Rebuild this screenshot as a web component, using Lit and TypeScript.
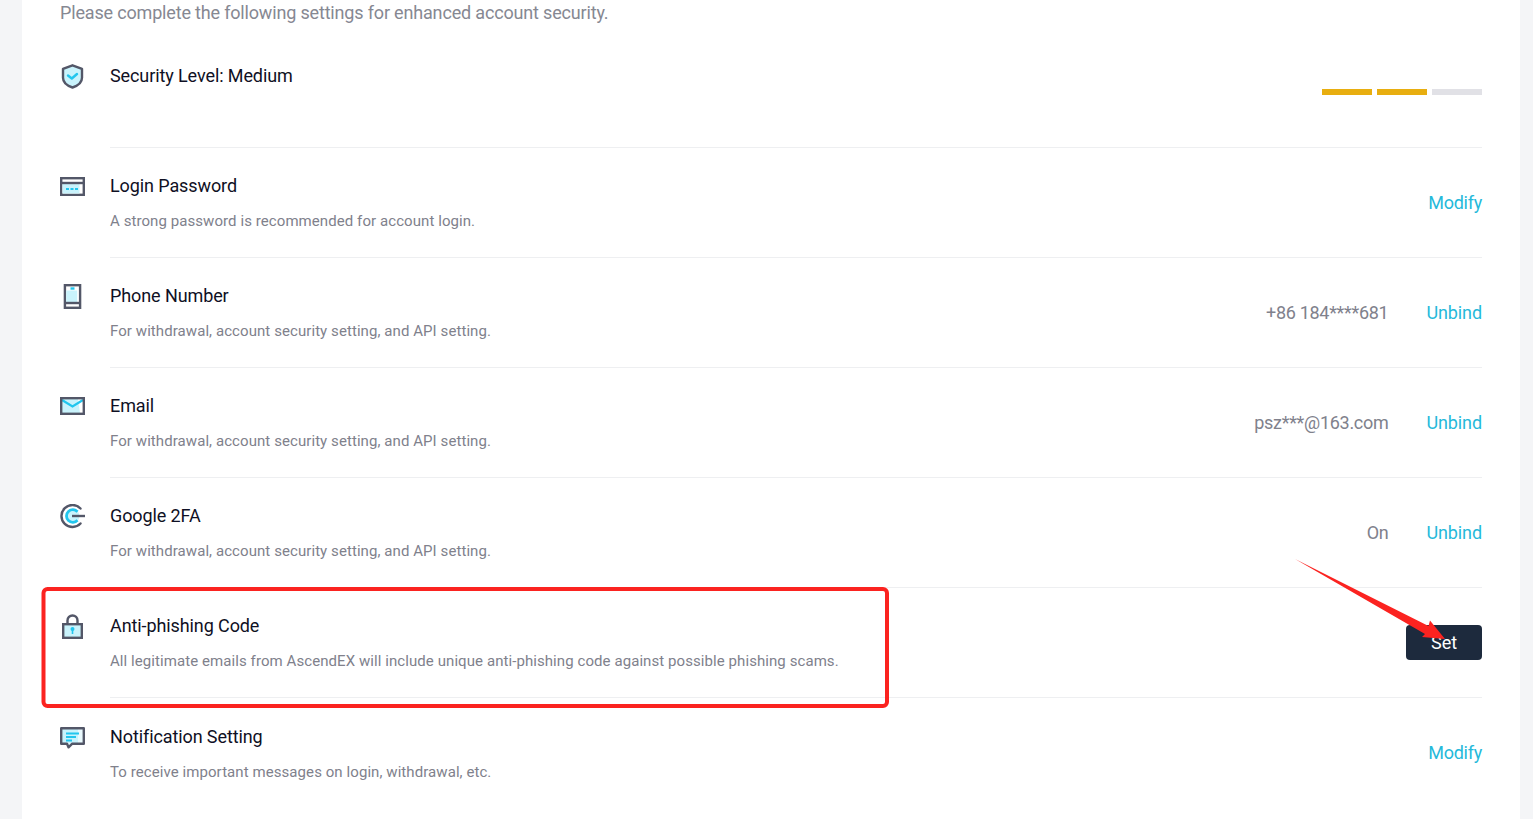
import { LitElement, html, css, svg } from "lit";
import { customElement } from "lit/decorators.js";

const D = "#535768";
const L = "#c9f3fc";
const C = "#22c6ee";
const W = 2.4;
const common = (body: unknown) => html`<svg class="ico" width="26" height="26" viewBox="0 0 26 26" fill="none">${body}</svg>`;

const icons: Record<string, unknown> = {
  shield: common(svg`
    <path d="M12.500 1.300 22 4.800v9c0 4.700-3.600 7.800-9.500 9.700C6.600 21.600 3 18.500 3 13.800v-9Z" fill="${L}" stroke="${D}" stroke-width="${W}" stroke-linejoin="round"/>
    <path d="M8 11.500l3.800 3 5.200-4.500" stroke="${C}" stroke-width="2.400" fill="none" stroke-linecap="round" stroke-linejoin="round"/>`),
  card: common(svg`
    <rect x="1.200" y="4.200" width="22.600" height="16.600" fill="#fff" stroke="${D}" stroke-width="${W}"/>
    <rect x="2.500" y="10" width="17" height="9.500" fill="${L}"/>
    <path d="M1 9h23" stroke="${D}" stroke-width="${W}"/>
    <path d="M6 15h3M10.500 15h3M15 15h3" stroke="${C}" stroke-width="2.200"/>`),
  phone: common(svg`
    <rect x="4.900" y="1.200" width="15.200" height="22.600" fill="#fff" stroke="${D}" stroke-width="${W}"/>
    <rect x="6.200" y="6.500" width="11" height="11.500" fill="${L}"/>
    <path d="M5 19h15" stroke="${D}" stroke-width="${W}"/>
    <path d="M10.500 4.500h4" stroke="${C}" stroke-width="2.400"/>`),
  mail: common(svg`
    <rect x="1.200" y="4.200" width="22.600" height="15.600" fill="${L}"/>
    <path d="M18 5h5v14h-3Z" fill="#fff"/>
    <path d="M2 6l10.500 6.500L23 6" stroke="${C}" stroke-width="2.200" fill="none"/>
    <rect x="1.200" y="4.200" width="22.600" height="15.600" stroke="${D}" stroke-width="${W}"/>`),
  google: common(svg`
    <path d="M20.500 4.500A11 11 0 1 0 20.500 19.500" stroke="${D}" stroke-width="${W}" fill="none" stroke-linecap="round"/>
    <circle cx="12.500" cy="12" r="7" fill="${L}"/>
    <path d="M17.500 7.800A6.300 6.300 0 1 0 17.500 16.200" stroke="${C}" stroke-width="2.800" fill="none"/>
    <path d="M12 12h13" stroke="${D}" stroke-width="${W}"/>`),
  lock: common(svg`
    <rect x="3.200" y="10.200" width="18.600" height="13.600" fill="${L}" stroke="${D}" stroke-width="${W}"/>
    <path d="M7.500 10V6.500a5 5 0 0 1 10 0V10" stroke="${D}" stroke-width="${W}" fill="none"/>
    <circle cx="12.500" cy="15" r="2" fill="${C}"/>
    <path d="M12.500 15v5" stroke="${C}" stroke-width="1.600"/>`),
  chat: common(svg`
    <path d="M1.200 3.200h22.600v15.600H12l-3.500 3.500L7 18.800H1.200Z" fill="#eafafe"/>
    <path d="M2 4h16v14H2Z" fill="${L}"/>
    <path d="M1.200 3.200h22.600v15.600H12l-3.500 3.500L7 18.800H1.200Z" stroke="${D}" stroke-width="${W}" stroke-linejoin="round"/>
    <path d="M6 8.500h13M6 12h10M6 15.500h6" stroke="${C}" stroke-width="1.900"/>`),
};

const rows = [
  { icon: "card", title: "Login Password", desc: "A strong password is recommended for account login.", value: "", action: "Modify" },
  { icon: "phone", title: "Phone Number", desc: "For withdrawal, account security setting, and API setting.", value: "+86 184****681", action: "Unbind" },
  { icon: "mail", title: "Email", desc: "For withdrawal, account security setting, and API setting.", value: "psz***@163.com", action: "Unbind" },
  { icon: "google", title: "Google 2FA", desc: "For withdrawal, account security setting, and API setting.", value: "On", action: "Unbind" },
  { icon: "lock", title: "Anti-phishing Code", desc: "All legitimate emails from AscendEX will include unique anti-phishing code against possible phishing scams.", value: "", action: "Set" },
  { icon: "chat", title: "Notification Setting", desc: "To receive important messages on login, withdrawal, etc.", value: "", action: "Modify" },
];

@customElement("app-root")
export class AppRoot extends LitElement {
  static styles = css`
    :host {
      display: block;
      height: 819px;
      overflow: hidden;
      position: relative;
      background: #f4f5f7;
      font-family: Roboto, "Liberation Sans", sans-serif;
    }
    .card {
      margin: 0 13px 0 22px;
      height: 819px;
      box-sizing: border-box;
      padding: 0 38px;
      background: #fff;
    }
    .intro {
      height: 38px;
      font-size: 18px;
      line-height: 26px;
      letter-spacing: -0.17px;
      color: #868892;
    }
    .row { display: flex; height: 110px; }
    .icon { width: 50px; flex: none; padding-top: 26px; box-sizing: border-box; }
    .ico { display: block; }
    .body {
      flex: 1;
      min-width: 0;
      display: flex;
      align-items: center;
      border-bottom: 1px solid #eeeff1;
      box-sizing: border-box;
    }
    .row.last .body { border-bottom-color: transparent; }
    .row.last .text { padding-top: 29px; }
    .row.last .icon { padding-top: 27px; }
    .text { flex: 1; min-width: 0; align-self: flex-start; padding-top: 28px; }
    .title { font-size: 18px; line-height: 20px; letter-spacing: -0.1px; color: #0f1024; }
    .desc { margin-top: 15px; font-size: 15px; line-height: 20px; letter-spacing: 0.075px; color: #80818c; }
    .value { font-size: 18px; letter-spacing: -0.3px; color: #80818c; margin-right: 38px; }
    .link { font-size: 18px; letter-spacing: -0.25px; color: #25b9da; }
    .link.unbind { letter-spacing: -0.1px; }
    .btn {
      width: 76px;
      height: 35px;
      display: flex;
      align-items: center;
      justify-content: center;
      background: #1d2a3d;
      color: #fff;
      border-radius: 4px;
      font-size: 18px;
    }
    .bars { display: flex; gap: 5px; margin-bottom: 2px; }
    .bar { width: 50px; height: 6px; background: #e8ae10; }
    .bar.off { background: #e1e1e6; }
    .notes { position: absolute; inset: 0; pointer-events: none; }
  `;

  render() {
    return html`
      <div class="card">
        <div class="intro">Please complete the following settings for enhanced account security.</div>
        <div class="row">
          <div class="icon">${icons.shield}</div>
          <div class="body">
            <div class="text"><div class="title">Security Level: Medium</div></div>
            <div class="bars"><span class="bar"></span><span class="bar"></span><span class="bar off"></span></div>
          </div>
        </div>
        ${rows.map((r, i) => html`
          <div class="row ${i === rows.length - 1 ? "last" : ""}">
            <div class="icon">${icons[r.icon]}</div>
            <div class="body">
              <div class="text">
                <div class="title">${r.title}</div>
                <div class="desc">${r.desc}</div>
              </div>
              ${r.value ? html`<div class="value">${r.value}</div>` : ""}
              ${r.action === "Set"
                ? html`<div class="btn">Set</div>`
                : html`<div class="link ${r.action === "Unbind" ? "unbind" : ""}">${r.action}</div>`}
            </div>
          </div>`)}
      </div>
      <svg class="notes" width="1533" height="819" viewBox="0 0 1533 819" fill="none">
        <rect x="43.500" y="589" width="843.500" height="117" rx="4" stroke="#fb2320" stroke-width="4"/>
        <path d="M1295 559 1428.500 626 1430 620.500 1445 639 1422 637 1425 634Z" fill="#fb2320"/>
      </svg>
    `;
  }
}
